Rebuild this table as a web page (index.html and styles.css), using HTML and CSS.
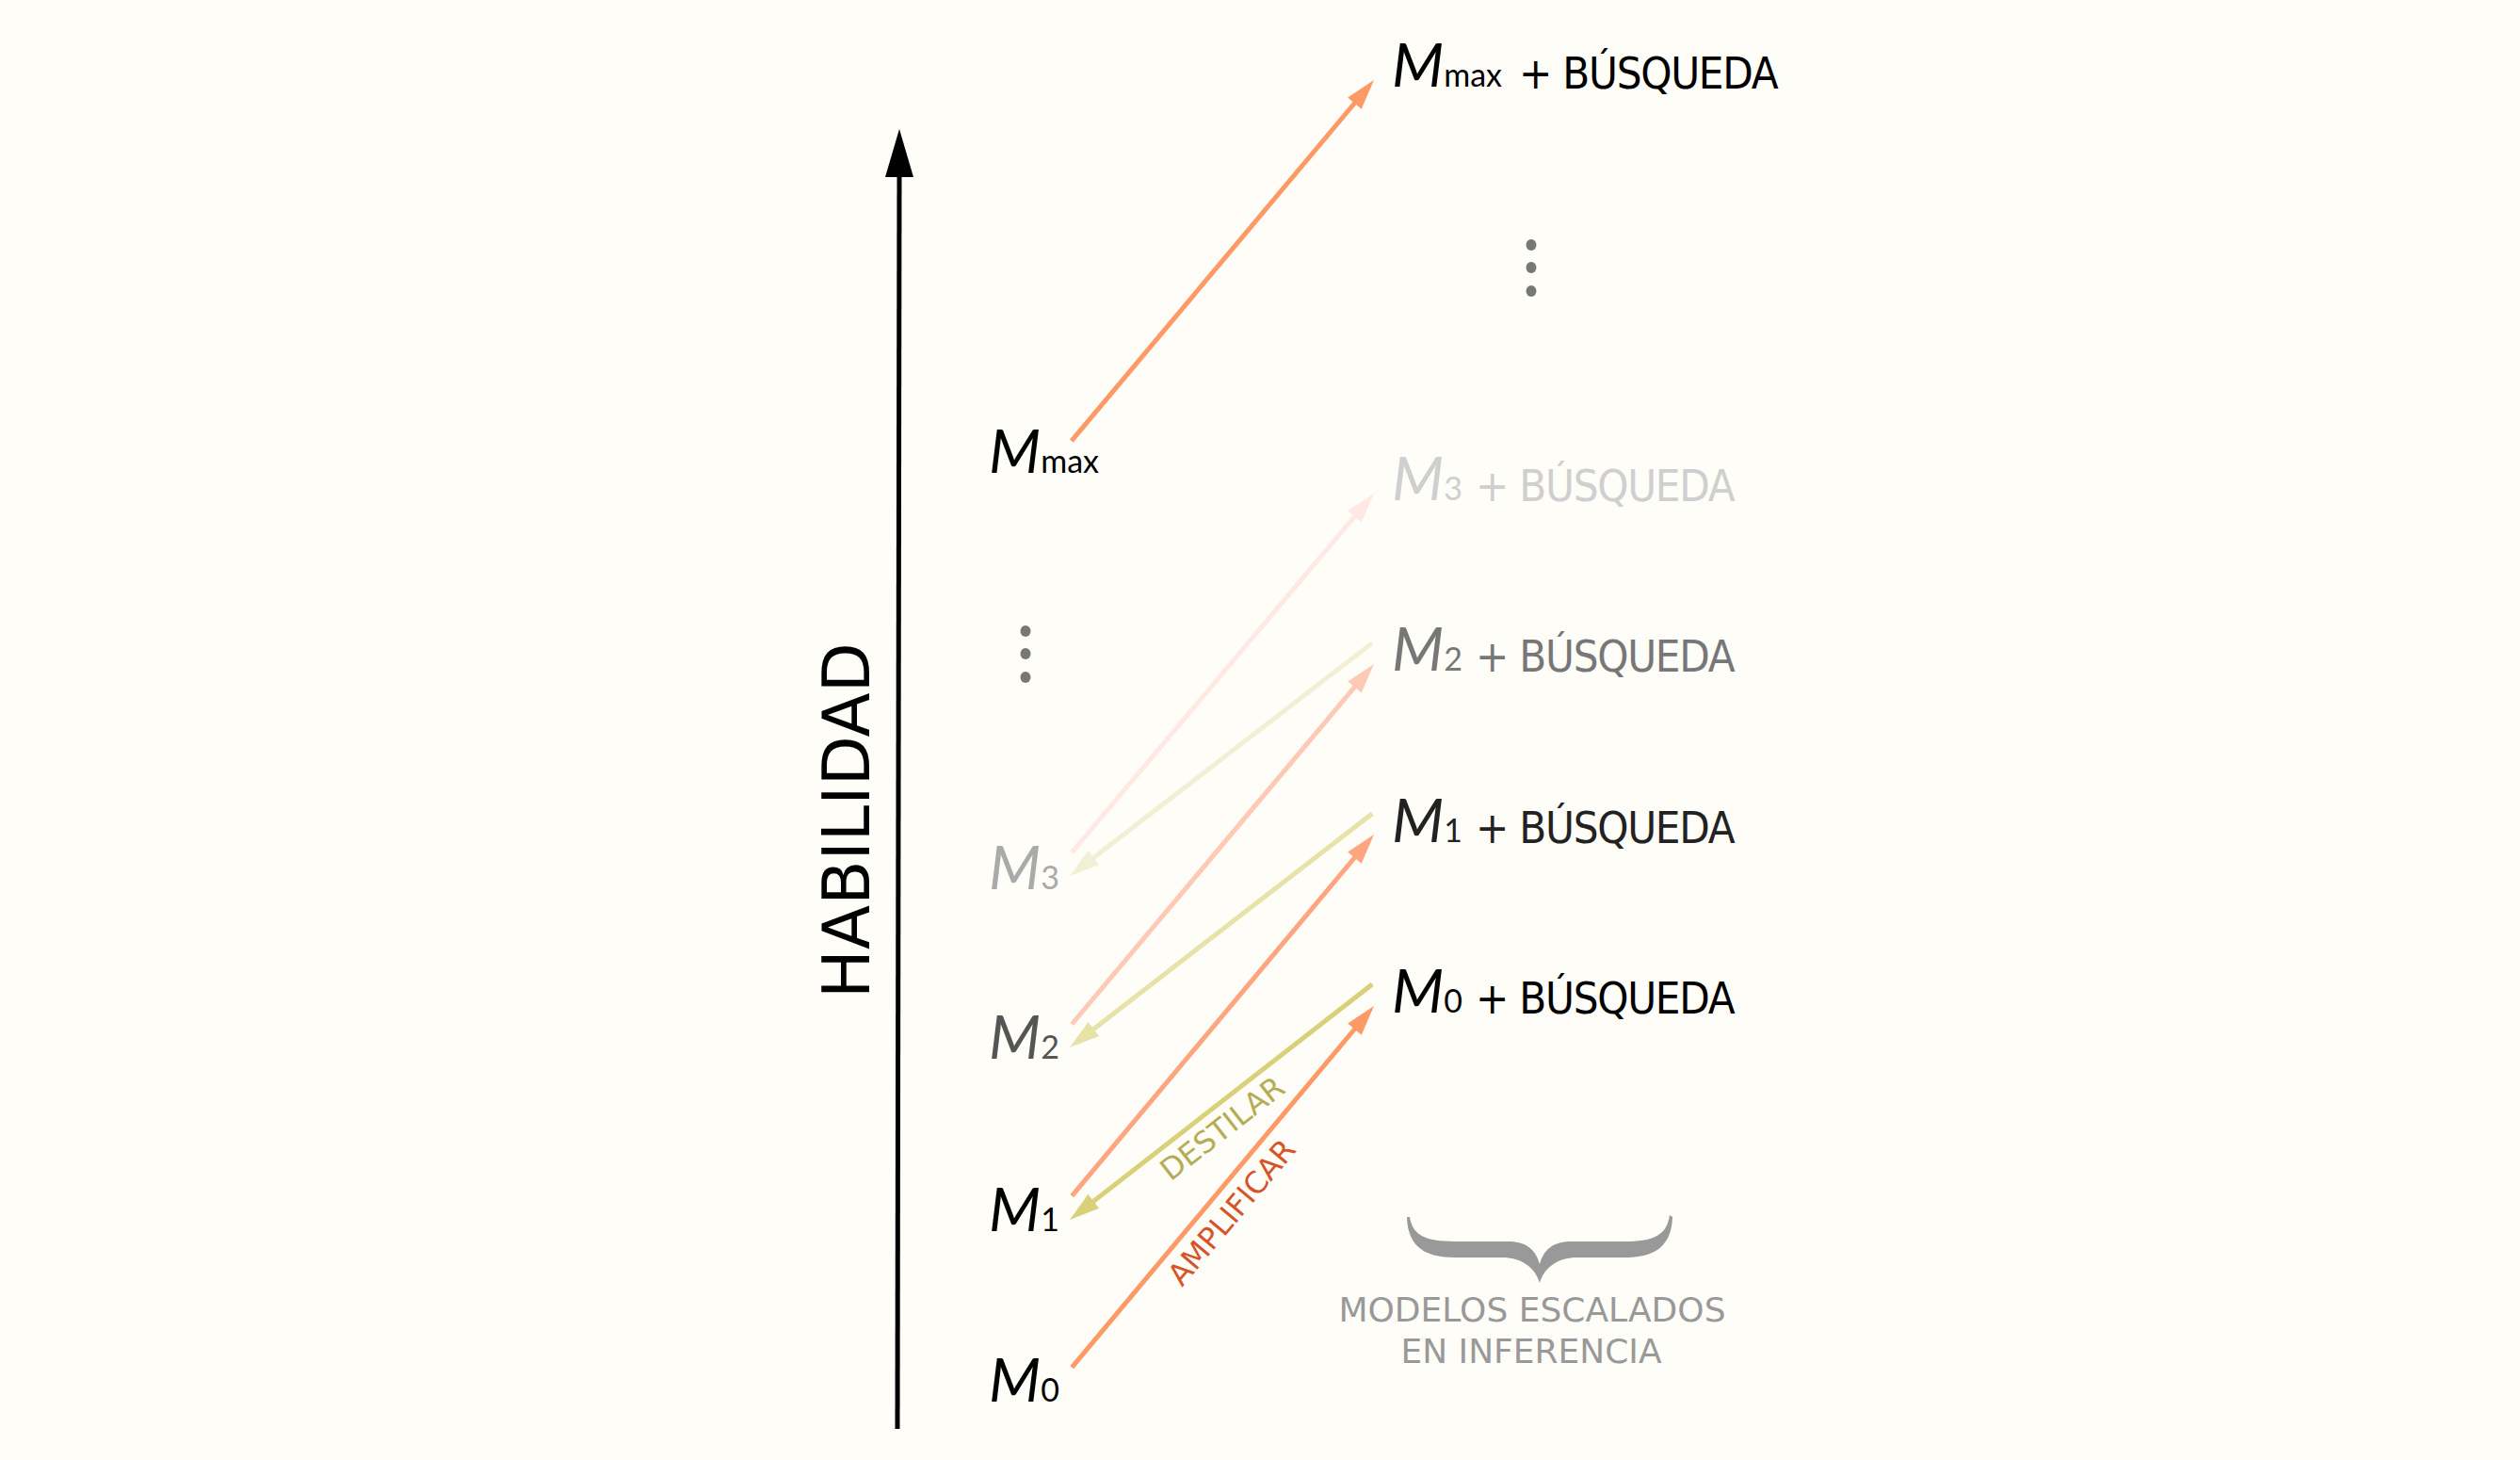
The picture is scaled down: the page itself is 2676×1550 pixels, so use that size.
FILE: index.html
```html
<!DOCTYPE html>
<html lang="es">
<head>
<meta charset="utf-8">
<title>Modelos escalados en inferencia</title>
<link rel="stylesheet" href="styles.css">
</head>
<body>
<svg class="diagram" viewBox="0 0 2676 1550" width="2676" height="1550" xmlns="http://www.w3.org/2000/svg">
  <!-- axis -->
  <line class="axis" x1="953" y1="1517" x2="955" y2="186"/>
  <polygon class="axis-head" points="955,137 970,188 940,188"/>
  <text class="axis-label" transform="translate(923 871) rotate(-90)" text-anchor="middle">HABILIDAD</text>

  <!-- amplify arrows -->
  <g transform="translate(1459 85) rotate(-50.03)" class="amp amp-max">
    <line x1="-500" y1="0" x2="-30" y2="0"/><polygon points="0,0 -32,9.5 -32,-9.5"/>
  </g>
  <g transform="translate(1459 524) rotate(-49.9)" class="amp amp-3">
    <line x1="-498" y1="0" x2="-30" y2="0"/><polygon points="0,0 -32,9.5 -32,-9.5"/>
  </g>
  <g transform="translate(1459 705) rotate(-50)" class="amp amp-2">
    <line x1="-499" y1="0" x2="-30" y2="0"/><polygon points="0,0 -32,9.5 -32,-9.5"/>
  </g>
  <g transform="translate(1459 886) rotate(-50.1)" class="amp amp-1">
    <line x1="-500" y1="0" x2="-30" y2="0"/><polygon points="0,0 -32,9.5 -32,-9.5"/>
  </g>
  <g transform="translate(1459 1068) rotate(-50.1)" class="amp amp-0">
    <line x1="-500" y1="0" x2="-30" y2="0"/><polygon points="0,0 -32,9.5 -32,-9.5"/>
  </g>

  <!-- distill arrows -->
  <g transform="translate(1136 930) rotate(142.4)" class="dis dis-3">
    <line x1="-405" y1="0" x2="-30" y2="0"/><polygon points="0,0 -32,9.5 -32,-9.5"/>
  </g>
  <g transform="translate(1136 1112) rotate(142.3)" class="dis dis-2">
    <line x1="-406" y1="0" x2="-30" y2="0"/><polygon points="0,0 -32,9.5 -32,-9.5"/>
  </g>
  <g transform="translate(1136 1295) rotate(142.1)" class="dis dis-1">
    <line x1="-407" y1="0" x2="-30" y2="0"/><polygon points="0,0 -32,9.5 -32,-9.5"/>
  </g>

  <text class="verb verb-dis" transform="translate(1298 1198) rotate(-37.9)" text-anchor="middle" dominant-baseline="central">DESTILAR</text>
  <text class="verb verb-amp" transform="translate(1308 1287) rotate(-50)" text-anchor="middle" dominant-baseline="central">AMPLIFICAR</text>

  <!-- left models -->
  <text class="m tone-0" x="1050" y="502">M<tspan class="sub">max</tspan></text>
  <g class="dots">
    <ellipse cx="1089" cy="670" rx="5.5" ry="6"/>
    <ellipse cx="1089" cy="694" rx="5.5" ry="6"/>
    <ellipse cx="1089" cy="719" rx="5.5" ry="6"/>
  </g>
  <text class="m tone-3l" x="1050" y="944">M<tspan class="sub">3</tspan></text>
  <text class="m tone-2l" x="1050" y="1124">M<tspan class="sub">2</tspan></text>
  <text class="m tone-0" x="1050" y="1307">M<tspan class="sub">1</tspan></text>
  <text class="m tone-0" x="1050" y="1488">M<tspan class="sub">0</tspan></text>

  <!-- right models -->
  <text class="m tone-0" x="1478" y="92">M<tspan class="sub">max</tspan></text>
  <text class="plus tone-0" x="1613" y="94">+ BÚSQUEDA</text>
  <g class="dots">
    <ellipse cx="1626" cy="260" rx="5.5" ry="6"/>
    <ellipse cx="1626" cy="284" rx="5.5" ry="6"/>
    <ellipse cx="1626" cy="309" rx="5.5" ry="6"/>
  </g>
  <text class="m tone-3r" x="1478" y="531">M<tspan class="sub">3</tspan></text>
  <text class="plus tone-3r" x="1567" y="532">+ BÚSQUEDA</text>
  <text class="m tone-2r" x="1478" y="712">M<tspan class="sub">2</tspan></text>
  <text class="plus tone-2r" x="1567" y="713">+ BÚSQUEDA</text>
  <text class="m tone-1r" x="1478" y="894">M<tspan class="sub">1</tspan></text>
  <text class="plus tone-1r" x="1567" y="895">+ BÚSQUEDA</text>
  <text class="m tone-0" x="1478" y="1075">M<tspan class="sub">0</tspan></text>
  <text class="plus tone-0" x="1567" y="1076">+ BÚSQUEDA</text>

  <!-- brace -->
  <path class="brace" d="M1497,1292 C1500,1312 1515,1318 1545,1318 L1600,1318 C1620,1318 1630,1325 1635,1342 C1640,1325 1650,1318 1670,1318 L1725,1318 C1755,1318 1770,1312 1773,1290 L1776,1292 C1775,1325 1755,1335 1725,1335 L1675,1335 C1655,1335 1640,1345 1635,1362 C1630,1345 1615,1335 1595,1335 L1545,1335 C1515,1335 1495,1325 1494,1292 Z"/>
  <text class="caption" x="1627" y="1403">MODELOS ESCALADOS</text>
  <text class="caption" x="1626" y="1447">EN INFERENCIA</text>
</svg>
</body>
</html>
```
FILE: styles.css
```css
html, body {
  margin: 0;
  padding: 0;
  background: #fffdf8;
  overflow: hidden;
}

.diagram {
  display: block;
}

.axis {
  stroke: #000;
  stroke-width: 5;
}

.axis-head {
  fill: #000;
}

.axis-label {
  font-family: "DejaVu Sans", "Verdana", sans-serif;
  font-size: 69px;
  fill: #000;
}

.amp line,
.dis line {
  stroke-width: 5;
  stroke-linecap: butt;
}

.amp-max line, .amp-0 line { stroke: #ff9966; }
.amp-max polygon, .amp-0 polygon { fill: #ff9966; }
.amp-1 line { stroke: #ffa57f; }
.amp-1 polygon { fill: #ffa57f; }
.amp-2 line { stroke: #ffcab5; }
.amp-2 polygon { fill: #ffcab5; }
.amp-3 line { stroke: #ffe9e2; }
.amp-3 polygon { fill: #ffe9e2; }

.dis-1 line { stroke: #d9d07a; }
.dis-1 polygon { fill: #d9d07a; }
.dis-2 line { stroke: #e7e2a8; }
.dis-2 polygon { fill: #e7e2a8; }
.dis-3 line { stroke: #f1efd4; }
.dis-3 polygon { fill: #f1efd4; }

.verb {
  font-family: "DejaVu Sans", sans-serif;
  font-size: 32px;
}

.verb-dis { fill: #b4ad55; }
.verb-amp { fill: #d6542a; }

.m {
  font-family: "Lato", "Open Sans", sans-serif;
  font-style: italic;
  font-size: 64px;
}

.m .sub {
  font-style: normal;
  font-size: 34px;
}

.plus {
  font-family: "DejaVu Sans Condensed", "DejaVu Sans", sans-serif;
  font-stretch: condensed;
  font-size: 47px;
  letter-spacing: -1.3px;
}

.tone-0 { fill: #000; }
.tone-1r { fill: #222; }
.tone-2l { fill: #555; }
.tone-2r { fill: #777; }
.tone-3l { fill: #aaa; }
.tone-3r { fill: #cfcfcf; }

.dots { fill: #777; }

.brace { fill: #999; }

.caption {
  font-family: "DejaVu Sans", sans-serif;
  font-size: 36px;
  fill: #999;
  text-anchor: middle;
}
```
